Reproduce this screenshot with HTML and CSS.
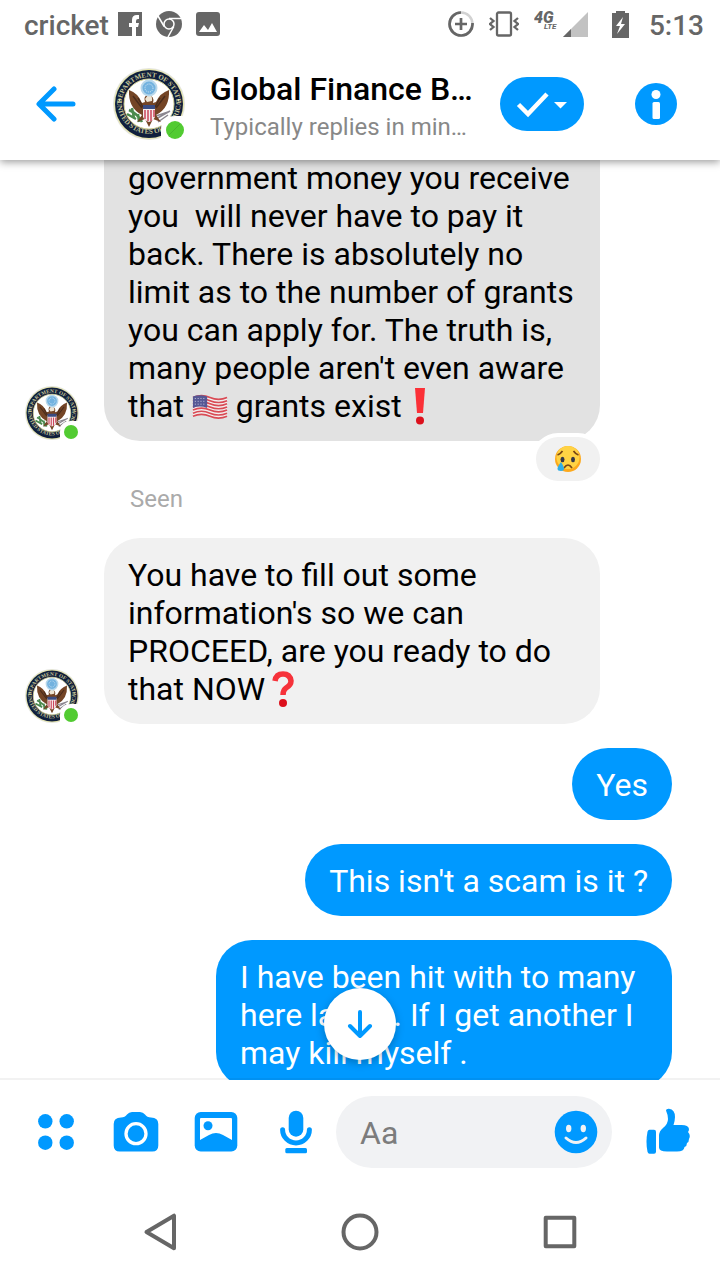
FILE: index.html
```html
<!DOCTYPE html>
<html lang="en">
<head>
  <meta charset="utf-8">
  <title>Chat</title>
  <meta content="width=device-width, initial-scale=1" name="viewport" />
  <link rel="stylesheet" href="styles.css">
</head>
<body>
  <svg class="defs" aria-hidden="true">
    <symbol id="seal" viewBox="0 0 72 72">
      <circle cx="36" cy="36" r="36" fill="#e4e5df"/>
      <circle cx="36" cy="36" r="35" fill="#e9e8a8"/>
      <circle cx="36" cy="36" r="34" fill="#101f3d"/>
      <circle cx="36" cy="36" r="25" fill="#fff" stroke="#d8d79a" stroke-width="1"/>
      <path id="sealTop" d="M11 48A27.500 27.500 0 1 1 61 48" fill="none"/>
      <path id="sealBottom" d="M4.200 34a31.800 31.800 0 0 0 63.600 0" fill="none"/>
      <text class="seal-text"><textPath href="#sealTop" startOffset="50%" text-anchor="middle">DEPARTMENT OF STATE</textPath></text>
      <text class="seal-text"><textPath href="#sealBottom" startOffset="50%" text-anchor="middle">UNITED STATES OF AMERICA</textPath></text>
      <circle cx="6.500" cy="32" r="1" fill="#e9e8a8"/>
      <circle cx="65.500" cy="32" r="1" fill="#e9e8a8"/>
      <path d="M16 42q9 4 13 12M19 40l2 10M14 46l9 5M25 46l1 8" stroke="#4b8a4e" stroke-width="2.500" fill="none"/>
      <path d="M43 51l14-8M43 48l12-4M45 54l10-7" stroke="#8b8790" stroke-width="1.500" fill="none"/>
      <path d="M16 22q-1 18 13 25l-5 7 8-3 4 8 4-8 8 3-5-7q14-7 13-25-9 3-13 12l-3 1q2-7-5-8-5 1-3 7l-3 1q-4-10-13-13z" fill="#744526"/>
      <path d="M20 28l9 12M25 30l5 9M52 28l-9 12M47 30l-5 9" stroke="#4a2c1c" stroke-width="1.500"/>
      <path d="M35 27q5 0 4 6l-5 1-2-3z" fill="#eee5d4"/>
      <path d="M30 39h12v10q-2 4-6 5-4-1-6-5z" fill="#f6eeee"/>
      <path d="M32 42v9M35 42v11M38 42v11M41 42v7" stroke="#cc465b" stroke-width="1.500"/>
      <path d="M30 37h12v4h-12z" fill="#394b82"/>
      <circle cx="36" cy="20" r="7.500" fill="#72b2df" stroke="#b7d7eb" stroke-width="2"/>
      <circle cx="36" cy="20" r="4" fill="none" stroke="#d8ebf8" stroke-dasharray="1 1"/>
    </symbol>
  </svg>

  <div class="statusbar">
    <span class="carrier">cricket</span>
    <svg class="status-facebook" width="24" height="24" viewBox="0 0 24 24"><path d="M0 0h24v24H0z" fill="#666"/><path d="M14 24v-9h-3v-4h3V8q0-5 5-5h2v4h-1q-2 0-2 2v2h3l-1 4h-2v9z" fill="#fff"/></svg>
    <svg class="status-chrome" width="26" height="26" viewBox="0 0 26 26"><circle cx="13" cy="13" r="13" fill="#666"/><circle cx="13" cy="13" r="5" fill="none" stroke="#fff" stroke-width="1.500"/><path d="M13 7.500h12M8.200 15.500L2 5M17.800 15.500L12 26" stroke="#fff" stroke-width="1.500"/></svg>
    <svg class="status-photo" width="24" height="24" viewBox="0 0 24 24"><rect width="24" height="24" rx="3" fill="#666"/><path d="M3 20l5-7 4 5 4-7 5 9z" fill="#fff"/></svg>
    <svg class="status-data" width="26" height="26" viewBox="0 0 26 26" fill="none"><circle cx="13" cy="13" r="11.500" stroke="#d2d2d2" stroke-width="2.500"/><path d="M13 1.500A11.500 11.500 0 1 0 24.500 12M13 7v12M7 13h12" stroke="#666" stroke-width="2.700"/></svg>
    <svg class="status-vibrate" width="30" height="26" viewBox="0 0 30 26" fill="none" stroke="#666" stroke-width="2.300"><rect x="8" y="1.500" width="14" height="23" rx="1.500"/><path d="M1 7l3.500 3L1 13l3.500 3L1 19M29 7l-3.500 3 3.500 3-3.500 3 3.500 3"/></svg>
    <svg class="status-signal" width="54" height="28" viewBox="0 0 54 28"><path d="M54 2v25H29z" fill="#c2c2c2"/><path d="M37 19v8h-8z" fill="#666"/><text class="network" x="0" y="13">4G</text><text class="network-small" x="10" y="19">LTE</text></svg>
    <svg class="status-battery" width="17" height="28" viewBox="0 0 17 28"><path d="M0 3h4V1h9v2h4v25H0z" fill="#666"/><path d="M11 7l-7 9h4l-3 8 8-10H9z" fill="#fff"/></svg>
    <span>5:13</span>
  </div>

  <header class="header">
    <button type="button" class="back" aria-label="Back">
      <svg width="40" height="40" viewBox="0 0 40 40" fill="none" stroke="#0099ff" stroke-width="5" stroke-linecap="round" stroke-linejoin="round"><path d="M37 20H4M18 5L3 20l15 15"/></svg>
    </button>
    <svg class="avatar-large" width="72" height="72" viewBox="0 0 72 72"><use href="#seal"/><path d="M48 72V62q0-14 14-14h10v24z" fill="#fff"/><circle cx="62" cy="62" r="9" fill="#52cb32"/><path d="M56 67l11-11" stroke="#48b52d"/></svg>
    <div class="contact">
      <h1>Global Finance B…</h1>
      <p>Typically replies in min…</p>
    </div>
    <button type="button" class="done" aria-label="Mark as done">
      <svg width="84" height="54" viewBox="0 0 84 54"><path d="M18.500 27.500L28 37l19-20" fill="none" stroke="#fff" stroke-width="4.500"/><path d="M54 25h13l-6.500 6.500z" fill="#fff"/></svg>
    </button>
    <button type="button" class="info" aria-label="Information">
      <svg width="42" height="42" viewBox="0 0 42 42"><circle cx="21" cy="21" r="21" fill="#0099ff"/><circle cx="21" cy="11.500" r="4.500" fill="#fff"/><rect x="17.500" y="19" width="7.500" height="17" rx="1.500" fill="#fff"/></svg>
    </button>
  </header>

  <main class="chat">
    <div class="thread">
      <div class="received">
        <svg class="avatar" width="56" height="56" viewBox="0 0 56 56"><use href="#seal" x="1" y="1" width="54" height="54"/><path d="M36 56v-9q0-11 11-11h9v20z" fill="#fff"/><circle cx="47" cy="47" r="7" fill="#52cb32"/></svg>
        <div class="bubble selected">government money you receive you &nbsp;will never have to pay it back. There is absolutely no limit as to the number of grants you can apply for. The truth is, many people aren't even aware that
          <svg class="emoji-flag" width="36" height="26" viewBox="0 0 38 26" role="img" aria-label="US flag"><path d="M1 3q9-4 18 0t18 0v20q-9 4-18 0t-18 0z" fill="#f3eeee"/><g fill="none" stroke="#d94b55" stroke-width="1.700"><path d="M1 3q9-4 18 0t18 0"/><path d="M1 6.300q9-4 18 0t18 0"/><path d="M1 9.600q9-4 18 0t18 0"/><path d="M1 12.900q9-4 18 0t18 0"/><path d="M1 16.200q9-4 18 0t18 0"/><path d="M1 19.500q9-4 18 0t18 0"/><path d="M1 22.800q9-4 18 0t18 0"/></g><path d="M1 2q7-3 15 0v12q-8-3-15 0z" fill="#555794"/><path d="M3 4h12M3 7h12M3 10h12" stroke="#cfd0e4" stroke-dasharray="1 2"/></svg>
          grants exist
          <svg class="emoji-mark" width="20" height="38" viewBox="0 0 20 38" role="img" aria-label="Exclamation mark"><path d="M5 1h10l-2 25H7z" fill="#fb3037"/><circle cx="10" cy="33.500" r="4" fill="#dc101c"/></svg>
          <button type="button" class="reaction" aria-label="Crying reaction">
            <svg width="26" height="26" viewBox="0 0 26 26"><circle cx="13" cy="13" r="13" fill="#fda91c"/><circle cx="13" cy="11.500" r="11.500" fill="#ffd344"/><path d="M2.500 9q3-1 5-4M18.500 5q2 3 5 4M9 22q4-6 8 0" fill="none" stroke="#784515" stroke-width="1.700"/><ellipse cx="7.500" cy="13.500" rx="2" ry="2.700" fill="#343747"/><ellipse cx="18" cy="13.500" rx="2" ry="2.700" fill="#343747"/><path d="M6 16q6 9 0 9-7 0 0-9" fill="#30aee6"/></svg>
          </button>
        </div>
      </div>
      <p class="seen">Seen</p>
      <div class="received">
        <svg class="avatar" width="56" height="56" viewBox="0 0 56 56"><use href="#seal" x="1" y="1" width="54" height="54"/><path d="M36 56v-9q0-11 11-11h9v20z" fill="#fff"/><circle cx="47" cy="47" r="7" fill="#52cb32"/></svg>
        <div class="bubble">You have to fill out some information's so we can PROCEED, are you ready to do that NOW<svg class="emoji-mark" width="38" height="38" viewBox="0 0 38 38" role="img" aria-label="Question mark"><path d="M10 11q1-7 8-7t8 7q0 4-5 7-3 2-3 7" fill="none" stroke="#f6323a" stroke-width="5.500"/><circle cx="18" cy="33" r="4" fill="#dc101c"/></svg></div>
      </div>
      <div class="bubble sent">Yes</div>
      <div class="bubble sent">This isn't a scam is it ?</div>
      <div class="bubble sent">I have been hit with to many here lately . If I get another I may kill myself .</div>
    </div>
    <button type="button" class="scroll-down" aria-label="Scroll to newest">
      <svg width="28" height="30" viewBox="0 0 28 30" fill="none" stroke="#0099ff" stroke-width="4" stroke-linecap="round" stroke-linejoin="round"><path d="M14 3v24M4 17l10 10 10-10"/></svg>
    </button>
  </main>

  <form class="composer">
    <button type="button" class="tool" aria-label="More"><svg width="48" height="48" viewBox="0 0 48 48" fill="#0099ff"><circle cx="13.300" cy="13.300" r="7.200"/><circle cx="34.700" cy="13.300" r="7.200"/><circle cx="13.300" cy="34.700" r="7.200"/><circle cx="34.700" cy="34.700" r="7.200"/></svg></button>
    <button type="button" class="tool" aria-label="Camera"><svg width="48" height="48" viewBox="0 0 48 48"><path d="M9 9.500q4 0 6-3 2-2.500 5-2.500h8q3 0 5 2.500 2 3 6 3 7.300 0 7.300 6.500v21.500q0 6-6 6H7.700q-6 0-6-6V16q0-6.500 7.300-6.500z" fill="#0099ff"/><circle cx="24" cy="25.700" r="10" fill="none" stroke="#fff" stroke-width="3.300"/></svg></button>
    <button type="button" class="tool" aria-label="Photos"><svg width="48" height="48" viewBox="0 0 48 48"><rect x="2.700" y="4" width="42.600" height="39.400" rx="6" fill="#0099ff"/><path d="M9 10h30q1 0 1 1v21l-9-5q-7-4-14 0l-9 5V11q0-1 1-1z" fill="#fff"/><circle cx="16" cy="17.700" r="4.500" fill="#0099ff"/></svg></button>
    <button type="button" class="tool" aria-label="Voice clip"><svg width="48" height="48" viewBox="0 0 48 48" fill="#0099ff"><rect x="16.700" y="2.700" width="14.600" height="26" rx="7.300"/><path d="M10.600 21.700a13.400 13.200 0 0 0 26.800 0" fill="none" stroke="#0099ff" stroke-width="5" stroke-linecap="round"/><rect x="13.300" y="40" width="21.700" height="5.300" rx="1.500"/></svg></button>
    <div class="field">
      <input type="text" placeholder="Aa" aria-label="Message">
      <button type="button" aria-label="Emoji"><svg width="44" height="44" viewBox="0 0 44 44"><circle cx="22" cy="22" r="21.300" fill="#0099ff"/><ellipse cx="14.700" cy="18.500" rx="2.700" ry="3.700" fill="#f1f2f4"/><ellipse cx="29.300" cy="18.500" rx="2.700" ry="3.700" fill="#f1f2f4"/><path d="M12 28q10 9 20 0" fill="none" stroke="#f1f2f4" stroke-width="3" stroke-linecap="round"/></svg></button>
    </div>
    <button type="button" class="like" aria-label="Like"><svg width="48" height="48" viewBox="0 0 48 48" fill="#0099ff"><path d="M7.500 21.700H12q2 0 2 2v20q0 2-2 2H7.500q-1.500 0-2-2-2-10 0-20 .5-2 2-2z"/><path d="M24 2.500q0-2 3-1.800 6 .8 6 8.300 0 3-1.500 8h8q7 0 7.500 4 0 2-1 3 3 3 1 7 0 3-2 4 0 3-2.500 4-.5 4.500-7.500 4.500H25q-8 0-8-4V28q0-5 4-8 5-4 5-9 0-4-2-8.500z"/></svg></button>
  </form>

  <nav class="navbar">
    <button type="button" aria-label="Back"><svg width="40" height="40" viewBox="0 0 40 40"><path d="M34 3.700v32.600L6.500 20z"/></svg></button>
    <button type="button" aria-label="Home"><svg width="40" height="40" viewBox="0 0 40 40"><circle cx="20" cy="20" r="16.500"/></svg></button>
    <button type="button" aria-label="Overview"><svg width="40" height="40" viewBox="0 0 40 40"><path d="M5.700 5.700h28.600v28.600H5.700z"/></svg></button>
  </nav>
</body>
</html>
```
FILE: styles.css
```css
* {
  box-sizing: border-box;
}
body {
  display: flex;
  flex-direction: column;
  height: 100vh;
  margin: 0;
  background: #fff;
  color: #000;
  font-family: Roboto, "Noto Sans", sans-serif;
}
button {
  display: flex;
  align-items: center;
  justify-content: center;
  padding: 0;
  border: none;
  background: none;
  cursor: pointer;
}
svg {
  flex: none;
}
.defs {
  position: absolute;
  width: 0;
  height: 0;
}
.seal-text {
  fill: #c6c596;
  font-family: "Liberation Serif", serif;
  font-size: 7px;
  font-weight: bold;
}

/* status bar */
.statusbar {
  position: relative;
  z-index: 2;
  display: flex;
  flex: none;
  align-items: center;
  height: 48px;
  padding: 2px 16px 0 24px;
  background: #fff;
  color: #666;
  font-size: 28px;
  font-weight: 500;
}
.statusbar svg {
  margin-bottom: 2px;
}
.status-facebook {
  margin-left: 9px;
}
.status-chrome,
.status-photo {
  margin-left: 14px;
}
.status-data {
  margin-left: auto;
}
.status-vibrate,
.status-signal {
  margin-left: 15px;
}
.status-battery {
  margin-right: 20px;
  margin-left: 24px;
}
.network {
  fill: #666;
  font-size: 16px;
  font-style: italic;
  font-weight: 900;
}
.network-small {
  fill: #666;
  font-size: 8px;
  font-style: italic;
  font-weight: 700;
}

/* header */
.header {
  position: relative;
  z-index: 1;
  display: flex;
  flex: none;
  align-items: center;
  height: 112px;
  padding: 0 43px 0 36px;
  background: #fff;
  box-shadow: 0 2px 8px rgba(0, 0, 0, 0.4);
}
.avatar-large {
  margin: 0 25px 0 37px;
}
.contact {
  flex: 1;
  min-width: 0;
  padding-top: 8px;
  white-space: nowrap;
}
.contact h1 {
  margin: 0;
  font-size: 32px;
  font-weight: 500;
  line-height: 38px;
}
.contact p {
  margin: 0;
  color: #888;
  font-size: 24px;
  line-height: 38px;
}
.done {
  margin: 0 51px 0 12px;
  border-radius: 27px;
  background: #0099ff;
}

/* messages */
.chat {
  position: relative;
  flex: 1;
  min-height: 0;
  overflow: hidden;
}
.thread {
  display: flex;
  flex-direction: column;
  margin-top: -1px;
  padding: 0 48px 0 24px;
}
.received {
  display: flex;
  align-items: flex-end;
  gap: 24px;
}
.bubble {
  position: relative;
  max-width: 496px;
  padding: 18px 24px 16px;
  border-radius: 36px;
  background: #f1f1f1;
  font-size: 32px;
  line-height: 38px;
}
.selected {
  padding-top: 0;
  border-radius: 0 0 36px 36px;
  background: #e2e2e2;
}
.sent {
  align-self: flex-end;
  max-width: 456px;
  margin-top: 24px;
  background: #0099ff;
  color: #fff;
}
.emoji-flag {
  vertical-align: -3px;
}
.emoji-mark {
  vertical-align: bottom;
}
.reaction {
  position: absolute;
  right: 0;
  bottom: -40px;
  width: 64px;
  height: 44px;
  border-radius: 22px;
  background: #f1f1f1;
  box-shadow: 0 0 0 4px #fff;
}
.seen {
  margin: 42px 0 23px 106px;
  color: #aaa;
  font-size: 24px;
  line-height: 32px;
}
.scroll-down {
  position: absolute;
  bottom: 20px;
  left: 50%;
  width: 72px;
  height: 72px;
  border-radius: 50%;
  background: #fff;
  box-shadow: 0 3px 8px rgba(0, 0, 0, 0.25);
  transform: translateX(-50%);
}

/* composer */
.composer {
  position: relative;
  display: flex;
  flex: none;
  align-items: center;
  height: 104px;
  padding-left: 16px;
  background: #fff;
  box-shadow: 0 -2px 0 rgba(0, 0, 0, 0.05);
}
.tool {
  width: 80px;
  height: 80px;
}
.field {
  display: flex;
  flex: 1;
  align-items: center;
  min-width: 0;
  height: 72px;
  padding: 0 14px 0 24px;
  border-radius: 36px;
  background: #f1f2f4;
}
.field input {
  flex: 1;
  min-width: 0;
  padding: 2px 0 0;
  border: none;
  outline: none;
  background: none;
  font-family: inherit;
  font-size: 32px;
}
.field input::placeholder {
  color: #7c7c7c;
}
.like {
  width: 108px;
  height: 80px;
}

/* system navigation */
.navbar {
  display: flex;
  flex: none;
  height: 96px;
  padding: 0 60px;
}
.navbar button {
  flex: 1;
}
.navbar svg {
  fill: none;
  stroke: #666;
  stroke-width: 4px;
  stroke-linejoin: round;
}
```
